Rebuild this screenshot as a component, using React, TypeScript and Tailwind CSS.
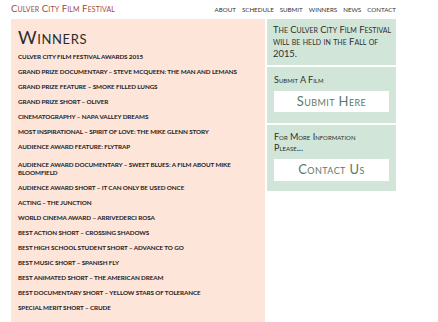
const awards = [
  'Culver City Film Festival Awards 2015',
  'Grand Prize Documentary – Steve McQueen: The Man and LeMans',
  'Grand Prize Feature – Smoke Filled Lungs',
  'Grand Prize Short – Oliver',
  'Cinematography – Napa Valley Dreams',
  'Most Inspirational – Spirit of Love: The Mike Glenn Story',
  'Audience Award Feature: Flytrap',
  'Audience Award Documentary – Sweet Blues: A Film About Mike Bloomfield',
  'Audience Award Short – It Can Only Be Used Once',
  'Acting – The Junction',
  'World Cinema Award – Arrivederci Rosa',
  'Best Action Short – Crossing Shadows',
  'Best High School Student Short – Advance to Go',
  'Best Music Short – Spanish Fly',
  'Best Animated Short – The American Dream',
  'Best Documentary Short – Yellow Stars of Tolerance',
  'Special Merit Short – Crude',
];

const nav = ['About', 'Schedule', 'Submit', 'Winners', 'News', 'Contact'];

export default function App() {
  return (
    <div className="w-[438px] h-[322px] overflow-hidden bg-white font-['Lato',sans-serif]">
      <div className="w-[385px] ml-[11px]">
        {/* Header */}
        <div className="h-[19px] flex items-center justify-between">
          <span className="text-[9.6px] text-[#a4493d] [font-variant:small-caps] tracking-[0.1px]">
            Culver City Film Festival
          </span>
          <nav className="flex gap-[6px] text-[6.2px] text-[#333] uppercase">
            {nav.map(n => (
              <span key={n}>{n}</span>
            ))}
          </nav>
        </div>

        <div className="flex gap-[2px] items-start">
          {/* Winners */}
          <div className="w-[254px] h-[310px] bg-[#fde5da] pl-[7px] pt-[7px]">
            <h1 className="text-[18px] leading-[22px] text-[#2b2b2b] [font-variant:small-caps] tracking-[0.6px] mb-[5px]">
              Winners
            </h1>
            <ul className="flex flex-col gap-[7.5px] pr-[17px]">
              {awards.map((a, i) => (
                <li
                  key={a}
                  className={`text-[6.3px] leading-[7.5px] font-bold uppercase text-[#222] tracking-[-0.1px] ${i === 7 ? 'mt-[3px]' : ''}`}
                >
                  {a}
                </li>
              ))}
            </ul>
          </div>

          {/* Sidebar */}
          <div className="w-[129px] flex flex-col gap-[2px]">
            <div className="h-[46px] bg-[#d1e6d8] px-[6px] pt-[5px] text-[9.4px] leading-[12px] text-[#2f2f2f] [font-variant:small-caps] whitespace-nowrap">
              The Culver City Film Festival
              <br />
              will be held in the Fall of
              <br />
              2015.
            </div>
            <div className="h-[56px] bg-[#d1e6d8] px-[7px] pt-[8px]">
              <p className="text-[9px] leading-[10px] text-[#2f2f2f] [font-variant:small-caps] mb-[6px]">
                Submit A Film
              </p>
              <div className="h-[21px] bg-white flex items-center justify-center text-[13px] text-[#5d7a68] [font-variant:small-caps] tracking-[0.4px]">
                Submit Here
              </div>
            </div>
            <div className="h-[66px] bg-[#d1e6d8] px-[7px] pt-[6px]">
              <p className="text-[9px] leading-[11px] text-[#2f2f2f] [font-variant:small-caps] mb-[6px]">
                For More Information
                <br />
                Please...
              </p>
              <div className="h-[22px] bg-white flex items-center justify-center text-[13px] text-[#5d7a68] [font-variant:small-caps] tracking-[0.4px]">
                Contact Us
              </div>
            </div>
          </div>
        </div>
      </div>
    </div>
  );
}
